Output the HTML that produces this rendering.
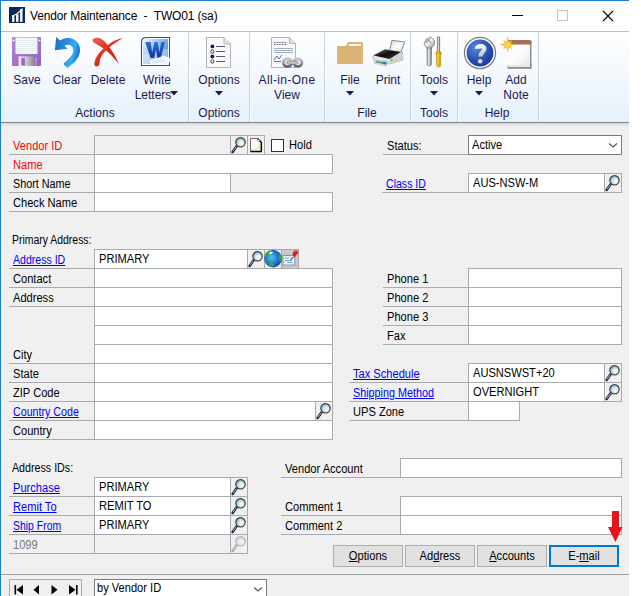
<!DOCTYPE html><html><head><meta charset="utf-8"><style>
html,body{margin:0;padding:0;}
body{width:641px;height:596px;overflow:hidden;background:#fff;position:relative;font-family:"Liberation Sans",sans-serif;}
.t{position:absolute;font-size:12px;line-height:12px;white-space:nowrap;color:#000;transform:scaleX(0.925);transform-origin:0 0;}
.tc{transform-origin:50% 0;}
.rt{position:absolute;font-size:12px;line-height:14px;white-space:nowrap;color:#1c1852;}
.lnk{color:#0000ff;text-decoration:underline;}
.b{position:absolute;border:1px solid #a9a9b1;box-sizing:content-box;}
.l{position:absolute;}
.ic{position:absolute;}
.ic svg{display:block;}
</style></head><body>
<div id="win" style="position:absolute;left:0;top:0;width:629px;height:596px;background:#f0f0f0;"></div>
<div class="l" style="left:0;top:0;width:629px;height:1px;background:#1a7fd4"></div>
<div class="l" style="left:0;top:0;width:1px;height:596px;background:#1a7fd4"></div>
<div class="l" style="left:1px;top:1px;width:628px;height:30px;background:#fff"></div>
<div class="l" style="left:1px;top:31px;width:628px;height:1px;background:#b9bcc3"></div>
<div class="l" style="left:1px;top:32px;width:628px;height:90px;background:linear-gradient(#fdfeff,#f5f9fd 40%,#e5f1fc)"></div>
<div class="l" style="left:1px;top:122px;width:628px;height:1px;background:#838589"></div>
<div class="l" style="left:1px;top:123px;width:628px;height:4px;background:linear-gradient(#d6d8db,#f0f0f0)"></div>

<div class="ic" style="left:9px;top:7px;"><svg width="16" height="16" viewBox="0 0 16 16"><rect width="16" height="16" fill="#0b2a5a"/><rect x="3.1" y="9" width="2.3" height="5.9" fill="#fff"/><rect x="7.1" y="7.4" width="2.4" height="7.5" fill="#fff"/><rect x="11.1" y="4.2" width="2.4" height="10.7" fill="#fff"/><path d="M3 9 L7.5 7.2 L12.3 3" stroke="#fff" stroke-width="1.1" fill="none"/><path d="M10.6 2.2 L14 1.6 L13.4 5 Z" fill="#fff"/></svg></div>
<div class="t" style="left:30px;top:9px;font-size:12px;line-height:14px;letter-spacing:-0.16px;transform:none;">Vendor Maintenance &nbsp;- &nbsp;TWO01 (sa)</div>
<div class="l" style="left:512px;top:15px;width:11px;height:1px;background:#000"></div>
<div class="b" style="left:557px;top:10px;width:9px;height:9px;background:transparent;border-color:#c4c4c4"></div>
<div class="ic" style="left:602px;top:10px;"><svg width="12" height="12" viewBox="0 0 12 12"><path d="M1 1 L11 11 M11 1 L1 11" stroke="#000" stroke-width="1.1"/></svg></div>
<div class="l" style="left:188px;top:32px;width:1px;height:90px;background:#ccd2da"></div>
<div class="l" style="left:189px;top:32px;width:1px;height:90px;background:#fbfdff"></div>
<div class="l" style="left:249px;top:32px;width:1px;height:90px;background:#ccd2da"></div>
<div class="l" style="left:250px;top:32px;width:1px;height:90px;background:#fbfdff"></div>
<div class="l" style="left:324px;top:32px;width:1px;height:90px;background:#ccd2da"></div>
<div class="l" style="left:325px;top:32px;width:1px;height:90px;background:#fbfdff"></div>
<div class="l" style="left:410px;top:32px;width:1px;height:90px;background:#ccd2da"></div>
<div class="l" style="left:411px;top:32px;width:1px;height:90px;background:#fbfdff"></div>
<div class="l" style="left:457px;top:32px;width:1px;height:90px;background:#ccd2da"></div>
<div class="l" style="left:458px;top:32px;width:1px;height:90px;background:#fbfdff"></div>
<div class="l" style="left:538px;top:32px;width:1px;height:90px;background:#ccd2da"></div>
<div class="l" style="left:539px;top:32px;width:1px;height:90px;background:#fbfdff"></div>
<div class="rt" style="left:-33px;width:120px;text-align:center;top:73px;">Save</div>
<div class="rt" style="left:7px;width:120px;text-align:center;top:73px;">Clear</div>
<div class="rt" style="left:48px;width:120px;text-align:center;top:73px;">Delete</div>
<div class="rt" style="left:97px;width:120px;text-align:center;top:73px;">Write</div>
<div class="rt" style="left:93px;width:120px;text-align:center;top:88px;">Letters</div>
<div class="ic" style="left:170px;top:91px;"><svg width="8" height="5" viewBox="0 0 8 5"><path d="M0 0 L8 0 L4 4.5 Z" fill="#1b1b50"/></svg></div>
<div class="rt" style="left:159px;width:120px;text-align:center;top:73px;">Options</div>
<div class="ic" style="left:214.5px;top:91px;"><svg width="8" height="5" viewBox="0 0 8 5"><path d="M0 0 L8 0 L4 4.5 Z" fill="#1b1b50"/></svg></div>
<div class="rt" style="left:227px;width:120px;text-align:center;top:73px;"><span style="letter-spacing:0.35px">All-in-One</span></div>
<div class="rt" style="left:227px;width:120px;text-align:center;top:88px;">View</div>
<div class="rt" style="left:290px;width:120px;text-align:center;top:73px;">File</div>
<div class="ic" style="left:346px;top:91px;"><svg width="8" height="5" viewBox="0 0 8 5"><path d="M0 0 L8 0 L4 4.5 Z" fill="#1b1b50"/></svg></div>
<div class="rt" style="left:328px;width:120px;text-align:center;top:73px;">Print</div>
<div class="rt" style="left:374px;width:120px;text-align:center;top:73px;">Tools</div>
<div class="ic" style="left:429.5px;top:91px;"><svg width="8" height="5" viewBox="0 0 8 5"><path d="M0 0 L8 0 L4 4.5 Z" fill="#1b1b50"/></svg></div>
<div class="rt" style="left:419px;width:120px;text-align:center;top:73px;">Help</div>
<div class="ic" style="left:475px;top:91px;"><svg width="8" height="5" viewBox="0 0 8 5"><path d="M0 0 L8 0 L4 4.5 Z" fill="#1b1b50"/></svg></div>
<div class="rt" style="left:456px;width:120px;text-align:center;top:73px;">Add</div>
<div class="rt" style="left:456px;width:120px;text-align:center;top:88px;">Note</div>
<div class="rt" style="left:35px;width:120px;text-align:center;top:106px;">Actions</div>
<div class="rt" style="left:159px;width:120px;text-align:center;top:106px;">Options</div>
<div class="rt" style="left:307px;width:120px;text-align:center;top:106px;">File</div>
<div class="rt" style="left:374px;width:120px;text-align:center;top:106px;">Tools</div>
<div class="rt" style="left:437px;width:120px;text-align:center;top:106px;">Help</div>
<div class="ic" style="left:11px;top:36px;"><svg width="32" height="32" viewBox="0 0 32 32">
<defs><linearGradient id="fpb" x1="0" y1="0" x2="1" y2="1"><stop offset="0" stop-color="#b086d2"/><stop offset="1" stop-color="#9260be"/></linearGradient>
<linearGradient id="fps" x1="0" y1="0" x2="1" y2="0"><stop offset="0" stop-color="#f4f4f4"/><stop offset="0.5" stop-color="#c8c8c8"/><stop offset="1" stop-color="#8e8e8e"/></linearGradient></defs>
<rect x="1" y="1" width="29" height="29" rx="1" fill="url(#fpb)"/>
<rect x="4.5" y="1.5" width="22" height="16.5" fill="#f6f9fc"/>
<path d="M5 4.5H26M5 6.5H26M5 8.5H26M5 10.5H26M5 12.5H26M5 14.5H26M5 16.5H26" stroke="#d8e4ee" stroke-width="0.6"/>
<rect x="7.6" y="20.4" width="15.6" height="9.6" fill="url(#fps)"/>
<rect x="10.3" y="22" width="3.6" height="7.5" fill="#9d66c8"/>
<rect x="24" y="21" width="2" height="9" fill="#b486d8"/>
<circle cx="2.6" cy="4.4" r="0.9" fill="#fff"/><circle cx="28.6" cy="4.4" r="0.9" fill="#fff"/>
</svg></div>
<div class="ic" style="left:53px;top:36px;"><svg width="28" height="33" viewBox="0 0 28 33">
<defs><linearGradient id="clg" x1="0" y1="0" x2="1" y2="0.3"><stop offset="0" stop-color="#1c6cc0"/><stop offset="0.55" stop-color="#2a90e0"/><stop offset="0.8" stop-color="#38b0f4"/><stop offset="1" stop-color="#1c78cc"/></linearGradient></defs>
<path d="M3.3 1 L7 4.5 C10 2.5, 13 2, 15.5 2 C22 2, 27 7, 27 14 C27 19, 24.5 23, 21 26.5 L14.5 32 L10.3 28 L16.5 22 C19 19.5, 20.2 17, 20.2 14 C20.2 10.5, 17.5 8.8, 15 8.8 C13.5 8.8, 12.5 9.2, 11.5 10 L14.8 12.8 L1.8 14.3 Z" fill="url(#clg)"/>
</svg></div>
<div class="ic" style="left:91px;top:36px;"><svg width="34" height="32" viewBox="0 0 34 32">
<defs><linearGradient id="dlg" x1="0" y1="0" x2="1" y2="1"><stop offset="0" stop-color="#ee6a58"/><stop offset="0.5" stop-color="#dc2814"/><stop offset="1" stop-color="#c81a08"/></linearGradient></defs>
<path d="M1.5 4.5 C1 2.5, 5 1.5, 8.2 2 C12 3, 15 7, 17.5 10 C21 14.5, 25 21, 27.9 28 C23 22, 19 17.5, 14.5 14 C10 10.5, 5 8, 2.5 6.5 C1.8 6, 1.5 5.2, 1.5 4.5 Z" fill="url(#dlg)"/>
<path d="M31.9 2 C24 6.5, 18 11, 14 15.5 C10 19.5, 8.5 24, 8.5 27.5 C8.5 29.5, 7 30.5, 5.5 30.5 C4 30.5, 3.2 29, 3.4 27 C3.8 23, 6.5 18.5, 11 14 C17 8, 24 3.5, 31.9 2 Z" fill="url(#dlg)"/>
</svg></div>
<div class="ic" style="left:140px;top:36px;"><svg width="32" height="32" viewBox="0 0 32 32">
<defs><linearGradient id="wbg" x1="0" y1="0" x2="1" y2="0.6"><stop offset="0" stop-color="#eef5fd"/><stop offset="0.45" stop-color="#a8c8f0"/><stop offset="1" stop-color="#5a90dc"/></linearGradient>
<linearGradient id="wW" x1="0" y1="0" x2="0" y2="1"><stop offset="0" stop-color="#2c70d8"/><stop offset="1" stop-color="#0a3a9c"/></linearGradient></defs>
<path d="M6.5 1.5 H29.5 V29.5 H1.5 V6.5 Q1.5 1.5 6.5 1.5 Z" fill="#fff" stroke="#1d54a8" stroke-width="1.1"/>
<path d="M7 3 H28 V28 H3 V7 Q3 3 7 3 Z" fill="url(#wbg)"/>
<path d="M3 20 Q10 14 28 13 V28 H3 Z" fill="#ffffff" opacity="0.35"/>
<path d="M5.2 6 H10.6 L12.2 16.2 L14.6 6 H17.6 L19.4 16.2 L21.2 6 H25 L20.8 22 H17.3 L15.9 13.5 L14.2 22 H10.6 Z" fill="url(#wW)"/>
<path d="M9 25 L24 19.5 L31 22.5 L28.5 29 L11 28.5 Z" fill="#f6f9fd" opacity="0.95"/>
<path d="M12 26 L22 23.5 M13 27.3 L25 24.8" stroke="#bcd0e8" stroke-width="0.6"/>
</svg></div>
<div class="ic" style="left:205px;top:36px;"><svg width="28" height="33" viewBox="0 0 28 33">
<path d="M1.5 1.5 H19 L25.5 8 V31.5 H1.5 Z" fill="#f8f8f8" stroke="#b4b4b4" stroke-width="1"/>
<path d="M19 1.5 V8 H25.5" fill="#e4e4e4" stroke="#b4b4b4" stroke-width="1"/>
<circle cx="7.4" cy="10.4" r="1.9" fill="#1e1a48"/>
<circle cx="7.4" cy="15.5" r="1.6" fill="#fff" stroke="#1e1a48" stroke-width="0.9"/>
<circle cx="7.4" cy="20.5" r="1.9" fill="#1e1a48"/>
<circle cx="7.4" cy="25.5" r="1.6" fill="#fff" stroke="#1e1a48" stroke-width="0.9"/>
<path d="M11 10.5H20M11 15.5H20M11 20.5H20M11 25.5H20" stroke="#5e5682" stroke-width="1.1"/>
</svg></div>
<div class="ic" style="left:270px;top:36px;"><svg width="34" height="33" viewBox="0 0 34 33">
<defs><linearGradient id="chg" x1="0" y1="0" x2="0" y2="1"><stop offset="0" stop-color="#c4c4cc"/><stop offset="0.5" stop-color="#9a9aa2"/><stop offset="1" stop-color="#5c5c66"/></linearGradient></defs>
<path d="M1.5 1.5 H19.5 L25.5 7.5 V31.5 H1.5 Z" fill="#f8f8f8" stroke="#b4b4b4" stroke-width="1"/>
<path d="M19.5 1.5 V7.5 H25.5" fill="#e4e4e4" stroke="#b4b4b4" stroke-width="1"/>
<path d="M4 6.5H17M4 8.5H17" stroke="#404050" stroke-width="0.8" stroke-dasharray="1 0.6"/>
<path d="M4 12.5H23M4 14.5H23M4 16.5H23" stroke="#9aa8bc" stroke-width="0.9"/>
<path d="M4 24 L7 20 L9 23 L12 19 M4 25.5 H11" stroke="#3060d0" stroke-width="0.9" fill="none"/>
<rect x="13.2" y="22.8" width="8.6" height="7.6" rx="3.8" fill="#dcdce0" stroke="url(#chg)" stroke-width="2.5"/>
<rect x="23.6" y="22.8" width="8.4" height="7.6" rx="3.8" fill="#dcdce0" stroke="url(#chg)" stroke-width="2.5"/>
<rect x="17" y="25.3" width="10.5" height="2.8" rx="1.4" fill="#c8c8cc" stroke="#74747c" stroke-width="0.6"/>
</svg></div>
<div class="ic" style="left:336px;top:41px;"><svg width="28" height="24" viewBox="0 0 28 24">
<path d="M1 6.5 Q1 5 2.5 5 H10 L11.6 1.8 Q12 1 13 1 H25.5 Q27 1 27 2.5 V21.5 Q27 23 25.5 23 H2.5 Q1 23 1 21.5 Z" fill="#dcb478"/>
<path d="M12.3 5 L13.3 3 H25 V5 Z" fill="#fbf6ec"/>
<path d="M1 6 H27" stroke="#d2a868" stroke-width="0.6"/>
</svg></div>
<div class="ic" style="left:372px;top:39px;"><svg width="34" height="28" viewBox="0 0 34 28">
<defs><linearGradient id="prp" x1="0" y1="0" x2="1" y2="1"><stop offset="0" stop-color="#d8d8d8"/><stop offset="0.5" stop-color="#fafafa"/><stop offset="1" stop-color="#e0e0e0"/></linearGradient>
<linearGradient id="prt" x1="0" y1="0" x2="1" y2="1"><stop offset="0" stop-color="#707070"/><stop offset="0.45" stop-color="#101010"/><stop offset="1" stop-color="#303030"/></linearGradient>
<linearGradient id="prph" x1="0" y1="0" x2="1" y2="0"><stop offset="0" stop-color="#3a8ce8"/><stop offset="0.5" stop-color="#50b060"/><stop offset="1" stop-color="#1a5ad0"/></linearGradient></defs>
<path d="M17.6 11.8 L19.9 1.4 L32.7 2.9 L28.8 13.6 Z" fill="url(#prp)" stroke="#6a6a6a" stroke-width="0.8"/>
<path d="M0.8 17 L12.8 10.4 L30.5 13.2 L31 21 L17.6 25 L1.5 21 Z" fill="#e6e6e6" stroke="#9a9a9a" stroke-width="0.6"/>
<path d="M1.6 16.6 L12.8 10.6 L28.8 13 L17.6 20.1 Z" fill="url(#prt)"/>
<path d="M17.6 20.1 L30.3 13.6 L30.9 20.7 L17.6 24.3 Z" fill="#d0d0d0"/>
<path d="M2.5 21.2 L15.8 22.4 L14.6 27 L2.2 24.2 Z" fill="#f4f4f4" stroke="#9a9a9a" stroke-width="0.5"/>
<path d="M3.8 22 L14.8 23 L14 25.8 L3.5 23.6 Z" fill="url(#prph)"/>
<circle cx="19.6" cy="21" r="0.9" fill="#40c040"/>
</svg></div>
<div class="ic" style="left:423px;top:36px;"><svg width="20" height="32" viewBox="0 0 20 32">
<defs><linearGradient id="wrg" x1="0" y1="0" x2="1" y2="0"><stop offset="0" stop-color="#8a8a8a"/><stop offset="0.35" stop-color="#e8e8e8"/><stop offset="0.7" stop-color="#b0b0b0"/><stop offset="1" stop-color="#606060"/></linearGradient>
<linearGradient id="wrh" x1="0" y1="0" x2="1" y2="1"><stop offset="0" stop-color="#c8c8c8"/><stop offset="0.5" stop-color="#f0f0f0"/><stop offset="1" stop-color="#8a8a8a"/></linearGradient>
<linearGradient id="sdg" x1="0" y1="0" x2="1" y2="0"><stop offset="0" stop-color="#d09000"/><stop offset="0.4" stop-color="#f8d030"/><stop offset="1" stop-color="#b07800"/></linearGradient></defs>
<path d="M4 11 L4.2 29 Q6.2 31.3 8.3 29 L8.5 11 Z" fill="url(#wrg)" stroke="#6c6c6c" stroke-width="0.6"/>
<path d="M1.1 8.3 L3.2 3.1 L4.5 2.1 L5.6 4.2 L6.6 1.2 L8.5 1.6 L11.4 4.2 L11.2 8.8 L8.5 12 L4 12 Z" fill="url(#wrh)" stroke="#6c6c6c" stroke-width="0.7" stroke-linejoin="round"/>
<path d="M3 6.5 L5.6 4.2 L8 7" fill="none" stroke="#5a5a5a" stroke-width="0.8"/>
<rect x="14.2" y="1" width="2.6" height="15.5" fill="url(#wrg)" stroke="#707070" stroke-width="0.6"/>
<path d="M12.8 16 H18.2 V18.5 L17.6 19 V29.5 Q17.6 31 15.5 31 Q13.4 31 13.4 29.5 V19 L12.8 18.5 Z" fill="url(#sdg)" stroke="#b88a00" stroke-width="0.5"/>
</svg></div>
<div class="ic" style="left:463px;top:36px;"><svg width="34" height="34" viewBox="0 0 34 34">
<defs><radialGradient id="hpg" cx="0.35" cy="0.3" r="0.8"><stop offset="0" stop-color="#5a8ae0"/><stop offset="0.6" stop-color="#2450b0"/><stop offset="1" stop-color="#183a90"/></radialGradient></defs>
<circle cx="17" cy="17" r="15.6" fill="#fafafa" stroke="#7c7c7c" stroke-width="1.2"/>
<circle cx="17" cy="17" r="13.4" fill="url(#hpg)"/>
<defs><linearGradient id="qg" x1="0" y1="0" x2="0.3" y2="1"><stop offset="0" stop-color="#ffffff"/><stop offset="1" stop-color="#c8c8c8"/></linearGradient></defs><path d="M14 12.8 C14 9.6, 21.4 9.2, 21.4 12.8 C21.4 15.6, 17.4 16, 17.4 20.4" fill="none" stroke="url(#qg)" stroke-width="4.3"/>
<circle cx="17.2" cy="25.2" r="2.3" fill="#d8d8d8"/>
</svg></div>
<div class="ic" style="left:499px;top:36px;"><svg width="34" height="34" viewBox="0 0 34 34">
<defs><linearGradient id="nbg" x1="0" y1="0" x2="1" y2="1"><stop offset="0" stop-color="#ffffff"/><stop offset="0.6" stop-color="#fafafa"/><stop offset="1" stop-color="#e4e4e4"/></linearGradient>
<radialGradient id="stg" cx="0.5" cy="0.5" r="0.5"><stop offset="0" stop-color="#ffe040"/><stop offset="1" stop-color="#f09010"/></radialGradient></defs>
<rect x="8.5" y="28.5" width="24" height="4.3" fill="#8e8e8e"/>
<rect x="9" y="28.5" width="22.5" height="2.5" fill="#e8e8e8"/>
<path d="M8.2 4 H32.4 V29 H8.2 Z" fill="url(#nbg)"/>
<path d="M31.7 5 V32.5" stroke="#8a8a8a" stroke-width="1.4"/>
<path d="M8.2 8.5 V5.5 Q8.2 4 9.7 4 H30.9 Q32.4 4 32.4 5.5 V8.5 Z" fill="#a66e56"/>
<path d="M8.80 0.30 L9.95 5.73 L13.47 3.83 L11.57 7.35 L17.00 8.50 L11.57 9.65 L13.47 13.17 L9.95 11.27 L8.80 16.70 L7.65 11.27 L4.13 13.17 L6.03 9.65 L0.60 8.50 L6.03 7.35 L4.13 3.83 L7.65 5.73 Z" fill="url(#stg)"/>
</svg></div>

<div class="l" style="left:9px;top:154px;width:86px;height:1px;background:#a9a9b1"></div>
<div class="l" style="left:9px;top:173px;width:86px;height:1px;background:#a9a9b1"></div>
<div class="l" style="left:9px;top:192px;width:86px;height:1px;background:#a9a9b1"></div>
<div class="l" style="left:9px;top:211px;width:86px;height:1px;background:#a9a9b1"></div>
<div class="t " style="left:13px;top:140px;color:#ff0000;">Vendor ID</div>
<div class="t " style="left:13px;top:159px;color:#ff0000;">Name</div>
<div class="t " style="left:13px;top:178px;transform:scaleX(0.9);">Short Name</div>
<div class="t " style="left:13px;top:197px;">Check Name</div>
<div class="b" style="left:94px;top:135px;width:135px;height:18px;background:#f0f0f0;border-color:#a9a9b1;"></div>
<div class="b" style="left:231px;top:135px;width:16px;height:18px;background:#f0f0f0;border-color:#a9a9b1;border-left:none;"></div>
<div class="ic" style="left:230px;top:135px;"><svg width="17" height="19" viewBox="0 0 17 19"><defs><radialGradient id="lg1" cx="0.6" cy="0.6" r="0.65"><stop offset="0" stop-color="#fcf8e0"/><stop offset="0.35" stop-color="#e4eef6"/><stop offset="0.75" stop-color="#90c4f0"/><stop offset="1" stop-color="#6aa8e0"/></radialGradient></defs><path d="M6.6 11.3 L2.6 17" stroke="#20203a" stroke-width="2.5" stroke-linecap="round"/><path d="M6.3 11.6 L3 16.3" stroke="#d0dcec" stroke-width="0.8"/><circle cx="10.5" cy="7.3" r="4.7" fill="url(#lg1)" stroke="#45432e" stroke-width="1.2"/></svg></div>
<div class="b" style="left:248px;top:135px;width:16px;height:18px;background:#f0f0f0;border-left:none;"></div>
<div class="ic" style="left:249px;top:137px;"><svg width="14" height="16" viewBox="0 0 14 16"><path d="M1.5 14.5 V1.5 H8.5 L12.5 5.5 V14.5 Z" fill="#fffdf6"/><path d="M1.5 14.5 V1.5 H8.3" fill="none" stroke="#6a6a6a" stroke-width="1"/><path d="M8.5 1.5 L12.3 5.3 V14.4 H1.5" fill="none" stroke="#000" stroke-width="1.5"/><circle cx="9.6" cy="3.6" r="1.1" fill="#fff" stroke="#555" stroke-width="0.6"/><g fill="#f4e400"><circle cx="3" cy="12.4" r="0.75"/><circle cx="5" cy="12.4" r="0.75"/><circle cx="7.1" cy="12.4" r="0.75"/><circle cx="9" cy="12" r="0.75"/><circle cx="10.2" cy="10.6" r="0.75"/><circle cx="10.6" cy="8.9" r="0.75"/><circle cx="10.6" cy="7" r="0.75"/><circle cx="8.2" cy="10.8" r="0.6"/></g></svg></div>
<div class="b" style="left:271px;top:139px;width:11px;height:11px;background:#fff;border-color:#333;"></div>
<div class="t " style="left:289px;top:139px;">Hold</div>
<div class="b" style="left:94px;top:154px;width:237px;height:18px;background:#fff;border-color:#a9a9b1;"></div>
<div class="b" style="left:94px;top:173px;width:135px;height:18px;background:#fff;border-color:#a9a9b1;"></div>
<div class="b" style="left:94px;top:192px;width:237px;height:18px;background:#fff;border-color:#a9a9b1;"></div>
<div class="l" style="left:383px;top:154px;width:86px;height:1px;background:#a9a9b1"></div>
<div class="t " style="left:387px;top:140px;">Status:</div>
<div class="b" style="left:468px;top:135px;width:152px;height:18px;background:#fff;border-color:#7a7a7a;"></div>
<div class="t " style="left:472px;top:139px;">Active</div>
<div class="ic" style="left:608px;top:142px;"><svg width="10" height="7" viewBox="0 0 10 7"><path d="M1 1.5 L5 5 L9 1.5" fill="none" stroke="#555" stroke-width="1.2"/></svg></div>
<div class="l" style="left:382px;top:192px;width:87px;height:1px;background:#a9a9b1"></div>
<div class="t lnk" style="left:386px;top:178px;transform:scaleX(0.88);">Class ID</div>
<div class="b" style="left:468px;top:173px;width:135px;height:18px;background:#fff;border-color:#a9a9b1;"></div>
<div class="t " style="left:473px;top:177px;">AUS-NSW-M</div>
<div class="b" style="left:605px;top:173px;width:16px;height:18px;background:#f0f0f0;border-color:#a9a9b1;border-left:none;"></div>
<div class="ic" style="left:604px;top:173px;"><svg width="17" height="19" viewBox="0 0 17 19"><defs><radialGradient id="lg2" cx="0.6" cy="0.6" r="0.65"><stop offset="0" stop-color="#fcf8e0"/><stop offset="0.35" stop-color="#e4eef6"/><stop offset="0.75" stop-color="#90c4f0"/><stop offset="1" stop-color="#6aa8e0"/></radialGradient></defs><path d="M6.6 11.3 L2.6 17" stroke="#20203a" stroke-width="2.5" stroke-linecap="round"/><path d="M6.3 11.6 L3 16.3" stroke="#d0dcec" stroke-width="0.8"/><circle cx="10.5" cy="7.3" r="4.7" fill="url(#lg2)" stroke="#45432e" stroke-width="1.2"/></svg></div>
<div class="t " style="left:12px;top:234px;transform:scaleX(0.87);">Primary Address:</div>
<div class="l" style="left:9px;top:268px;width:86px;height:1px;background:#a9a9b1"></div>
<div class="l" style="left:9px;top:287px;width:86px;height:1px;background:#a9a9b1"></div>
<div class="l" style="left:9px;top:306px;width:86px;height:1px;background:#a9a9b1"></div>
<div class="l" style="left:9px;top:363px;width:86px;height:1px;background:#a9a9b1"></div>
<div class="l" style="left:9px;top:382px;width:86px;height:1px;background:#a9a9b1"></div>
<div class="l" style="left:9px;top:401px;width:86px;height:1px;background:#a9a9b1"></div>
<div class="l" style="left:9px;top:420px;width:86px;height:1px;background:#a9a9b1"></div>
<div class="l" style="left:9px;top:439px;width:86px;height:1px;background:#a9a9b1"></div>
<div class="t lnk" style="left:13px;top:254px;transform:scaleX(0.88);">Address ID</div>
<div class="t " style="left:13px;top:273px;">Contact</div>
<div class="t " style="left:13px;top:292px;">Address</div>
<div class="t " style="left:13px;top:349px;">City</div>
<div class="t " style="left:13px;top:368px;">State</div>
<div class="t " style="left:13px;top:387px;">ZIP Code</div>
<div class="t lnk" style="left:13px;top:406px;transform:scaleX(0.89);">Country Code</div>
<div class="t " style="left:13px;top:425px;">Country</div>
<div class="b" style="left:94px;top:249px;width:152px;height:18px;background:#fff;border-color:#a9a9b1;"></div>
<div class="t " style="left:99px;top:253px;">PRIMARY</div>
<div class="b" style="left:248px;top:249px;width:16px;height:18px;background:#f0f0f0;border-color:#a9a9b1;border-left:none;"></div>
<div class="ic" style="left:247px;top:249px;"><svg width="17" height="19" viewBox="0 0 17 19"><defs><radialGradient id="lg3" cx="0.6" cy="0.6" r="0.65"><stop offset="0" stop-color="#fcf8e0"/><stop offset="0.35" stop-color="#e4eef6"/><stop offset="0.75" stop-color="#90c4f0"/><stop offset="1" stop-color="#6aa8e0"/></radialGradient></defs><path d="M6.6 11.3 L2.6 17" stroke="#20203a" stroke-width="2.5" stroke-linecap="round"/><path d="M6.3 11.6 L3 16.3" stroke="#d0dcec" stroke-width="0.8"/><circle cx="10.5" cy="7.3" r="4.7" fill="url(#lg3)" stroke="#45432e" stroke-width="1.2"/></svg></div>
<div class="b" style="left:265px;top:249px;width:16px;height:18px;background:#f0f0f0;border-left:none;"></div>
<div class="ic" style="left:264px;top:249px;"><svg width="18" height="19" viewBox="0 0 18 19"><defs><radialGradient id="gl" cx="0.42" cy="0.45" r="0.6"><stop offset="0" stop-color="#4ad0e0"/><stop offset="0.55" stop-color="#2a7ad8"/><stop offset="1" stop-color="#1838b0"/></radialGradient></defs><circle cx="9" cy="9.6" r="8.8" fill="url(#gl)"/><path d="M1 6 Q2 2.5 5 1.8 Q5.5 4 4.5 6.5 Q3 8 1.2 8 Z M15.5 4 Q17.5 6 17.6 9.5 Q17 12.5 15.5 13 Q14.6 9 15.5 4 Z M4.5 13 Q7.5 12.5 10 14.5 Q10.5 17 8 18 Q5 17.5 4.5 13 Z" fill="#30b030"/><path d="M5 3.5 Q7 2 9 3 Q8 5 6 5.5 Z" fill="#e8f4ff"/></svg></div>
<div class="b" style="left:282px;top:249px;width:16px;height:18px;background:#c8c8c8;border-left:none;"></div>
<div class="ic" style="left:281px;top:249px;"><svg width="18" height="19" viewBox="0 0 18 19"><rect x="2" y="6.5" width="11.8" height="9.5" fill="#f2f8fc" stroke="#7a98b8" stroke-width="1"/><path d="M3.5 9 H8 M4 11.5 H11 M6 13.5 H12" stroke="#4a90d8" stroke-width="0.8"/><path d="M8.5 8 L12 9 M3 13 L5 12" stroke="#90c070" stroke-width="0.8"/><path d="M9.5 11 L13 7.5" stroke="#222" stroke-width="1"/><path d="M13.5 1.5 Q16 0.5 17.2 2.8 Q17.5 4.5 15.8 5.2 L13.8 8.2 L12 6.5 L11.5 4.5 Z" fill="#e01818"/><path d="M14 2.5 Q15.5 2 16 3" stroke="#ff8080" stroke-width="0.6" fill="none"/></svg></div>
<div class="b" style="left:94px;top:268px;width:237px;height:18px;background:#fff;border-color:#a9a9b1;"></div>
<div class="b" style="left:94px;top:287px;width:237px;height:18px;background:#fff;border-color:#a9a9b1;"></div>
<div class="b" style="left:94px;top:306px;width:237px;height:18px;background:#fff;border-color:#a9a9b1;"></div>
<div class="b" style="left:94px;top:325px;width:237px;height:18px;background:#fff;border-color:#a9a9b1;"></div>
<div class="b" style="left:94px;top:344px;width:237px;height:18px;background:#fff;border-color:#a9a9b1;"></div>
<div class="b" style="left:94px;top:363px;width:237px;height:18px;background:#fff;border-color:#a9a9b1;"></div>
<div class="b" style="left:94px;top:382px;width:237px;height:18px;background:#fff;border-color:#a9a9b1;"></div>
<div class="b" style="left:94px;top:420px;width:237px;height:18px;background:#fff;border-color:#a9a9b1;"></div>
<div class="b" style="left:94px;top:401px;width:220px;height:18px;background:#fff;border-color:#a9a9b1;"></div>
<div class="b" style="left:316px;top:401px;width:16px;height:18px;background:#f0f0f0;border-color:#a9a9b1;border-left:none;"></div>
<div class="ic" style="left:315px;top:401px;"><svg width="17" height="19" viewBox="0 0 17 19"><defs><radialGradient id="lg4" cx="0.6" cy="0.6" r="0.65"><stop offset="0" stop-color="#fcf8e0"/><stop offset="0.35" stop-color="#e4eef6"/><stop offset="0.75" stop-color="#90c4f0"/><stop offset="1" stop-color="#6aa8e0"/></radialGradient></defs><path d="M6.6 11.3 L2.6 17" stroke="#20203a" stroke-width="2.5" stroke-linecap="round"/><path d="M6.3 11.6 L3 16.3" stroke="#d0dcec" stroke-width="0.8"/><circle cx="10.5" cy="7.3" r="4.7" fill="url(#lg4)" stroke="#45432e" stroke-width="1.2"/></svg></div>
<div class="l" style="left:383px;top:287px;width:86px;height:1px;background:#a9a9b1"></div>
<div class="l" style="left:383px;top:306px;width:86px;height:1px;background:#a9a9b1"></div>
<div class="l" style="left:383px;top:325px;width:86px;height:1px;background:#a9a9b1"></div>
<div class="l" style="left:383px;top:344px;width:86px;height:1px;background:#a9a9b1"></div>
<div class="t " style="left:387px;top:273px;">Phone 1</div>
<div class="t " style="left:387px;top:292px;">Phone 2</div>
<div class="t " style="left:387px;top:311px;">Phone 3</div>
<div class="t " style="left:387px;top:330px;">Fax</div>
<div class="b" style="left:468px;top:268px;width:152px;height:18px;background:#fff;border-color:#a9a9b1;"></div>
<div class="b" style="left:468px;top:287px;width:152px;height:18px;background:#fff;border-color:#a9a9b1;"></div>
<div class="b" style="left:468px;top:306px;width:152px;height:18px;background:#fff;border-color:#a9a9b1;"></div>
<div class="b" style="left:468px;top:325px;width:152px;height:18px;background:#fff;border-color:#a9a9b1;"></div>
<div class="l" style="left:349px;top:382px;width:120px;height:1px;background:#a9a9b1"></div>
<div class="l" style="left:349px;top:401px;width:120px;height:1px;background:#a9a9b1"></div>
<div class="l" style="left:349px;top:420px;width:120px;height:1px;background:#a9a9b1"></div>
<div class="t lnk" style="left:353px;top:368px;">Tax Schedule</div>
<div class="t lnk" style="left:353px;top:387px;transform:scaleX(0.9);">Shipping Method</div>
<div class="t " style="left:353px;top:406px;">UPS Zone</div>
<div class="b" style="left:468px;top:363px;width:135px;height:18px;background:#fff;border-color:#a9a9b1;"></div>
<div class="t " style="left:473px;top:367px;">AUSNSWST+20</div>
<div class="b" style="left:605px;top:363px;width:16px;height:18px;background:#f0f0f0;border-color:#a9a9b1;border-left:none;"></div>
<div class="ic" style="left:604px;top:363px;"><svg width="17" height="19" viewBox="0 0 17 19"><defs><radialGradient id="lg5" cx="0.6" cy="0.6" r="0.65"><stop offset="0" stop-color="#fcf8e0"/><stop offset="0.35" stop-color="#e4eef6"/><stop offset="0.75" stop-color="#90c4f0"/><stop offset="1" stop-color="#6aa8e0"/></radialGradient></defs><path d="M6.6 11.3 L2.6 17" stroke="#20203a" stroke-width="2.5" stroke-linecap="round"/><path d="M6.3 11.6 L3 16.3" stroke="#d0dcec" stroke-width="0.8"/><circle cx="10.5" cy="7.3" r="4.7" fill="url(#lg5)" stroke="#45432e" stroke-width="1.2"/></svg></div>
<div class="b" style="left:468px;top:382px;width:135px;height:18px;background:#fff;border-color:#a9a9b1;"></div>
<div class="t " style="left:473px;top:386px;">OVERNIGHT</div>
<div class="b" style="left:605px;top:382px;width:16px;height:18px;background:#f0f0f0;border-color:#a9a9b1;border-left:none;"></div>
<div class="ic" style="left:604px;top:382px;"><svg width="17" height="19" viewBox="0 0 17 19"><defs><radialGradient id="lg6" cx="0.6" cy="0.6" r="0.65"><stop offset="0" stop-color="#fcf8e0"/><stop offset="0.35" stop-color="#e4eef6"/><stop offset="0.75" stop-color="#90c4f0"/><stop offset="1" stop-color="#6aa8e0"/></radialGradient></defs><path d="M6.6 11.3 L2.6 17" stroke="#20203a" stroke-width="2.5" stroke-linecap="round"/><path d="M6.3 11.6 L3 16.3" stroke="#d0dcec" stroke-width="0.8"/><circle cx="10.5" cy="7.3" r="4.7" fill="url(#lg6)" stroke="#45432e" stroke-width="1.2"/></svg></div>
<div class="b" style="left:468px;top:401px;width:50px;height:18px;background:#fff;border-color:#a9a9b1;"></div>
<div class="t " style="left:12px;top:462px;transform:scaleX(0.89);">Address IDs:</div>
<div class="l" style="left:9px;top:496px;width:86px;height:1px;background:#a9a9b1"></div>
<div class="l" style="left:9px;top:515px;width:86px;height:1px;background:#a9a9b1"></div>
<div class="l" style="left:9px;top:534px;width:86px;height:1px;background:#a9a9b1"></div>
<div class="l" style="left:9px;top:553px;width:86px;height:1px;background:#a9a9b1"></div>
<div class="t lnk" style="left:13px;top:482px;">Purchase</div>
<div class="t lnk" style="left:13px;top:501px;">Remit To</div>
<div class="t lnk" style="left:13px;top:520px;transform:scaleX(0.87);">Ship From</div>
<div class="t " style="left:13px;top:539px;color:#7a7a7a;">1099</div>
<div class="b" style="left:94px;top:477px;width:135px;height:18px;background:#fff;border-color:#a9a9b1;"></div>
<div class="t " style="left:99px;top:481px;">PRIMARY</div>
<div class="b" style="left:231px;top:477px;width:16px;height:18px;background:#f0f0f0;border-color:#a9a9b1;border-left:none;"></div>
<div class="ic" style="left:230px;top:477px;"><svg width="17" height="19" viewBox="0 0 17 19"><defs><radialGradient id="lg7" cx="0.6" cy="0.6" r="0.65"><stop offset="0" stop-color="#fcf8e0"/><stop offset="0.35" stop-color="#e4eef6"/><stop offset="0.75" stop-color="#90c4f0"/><stop offset="1" stop-color="#6aa8e0"/></radialGradient></defs><path d="M6.6 11.3 L2.6 17" stroke="#20203a" stroke-width="2.5" stroke-linecap="round"/><path d="M6.3 11.6 L3 16.3" stroke="#d0dcec" stroke-width="0.8"/><circle cx="10.5" cy="7.3" r="4.7" fill="url(#lg7)" stroke="#45432e" stroke-width="1.2"/></svg></div>
<div class="b" style="left:94px;top:496px;width:135px;height:18px;background:#fff;border-color:#a9a9b1;"></div>
<div class="t " style="left:99px;top:500px;">REMIT TO</div>
<div class="b" style="left:231px;top:496px;width:16px;height:18px;background:#f0f0f0;border-color:#a9a9b1;border-left:none;"></div>
<div class="ic" style="left:230px;top:496px;"><svg width="17" height="19" viewBox="0 0 17 19"><defs><radialGradient id="lg8" cx="0.6" cy="0.6" r="0.65"><stop offset="0" stop-color="#fcf8e0"/><stop offset="0.35" stop-color="#e4eef6"/><stop offset="0.75" stop-color="#90c4f0"/><stop offset="1" stop-color="#6aa8e0"/></radialGradient></defs><path d="M6.6 11.3 L2.6 17" stroke="#20203a" stroke-width="2.5" stroke-linecap="round"/><path d="M6.3 11.6 L3 16.3" stroke="#d0dcec" stroke-width="0.8"/><circle cx="10.5" cy="7.3" r="4.7" fill="url(#lg8)" stroke="#45432e" stroke-width="1.2"/></svg></div>
<div class="b" style="left:94px;top:515px;width:135px;height:18px;background:#fff;border-color:#a9a9b1;"></div>
<div class="t " style="left:99px;top:519px;">PRIMARY</div>
<div class="b" style="left:231px;top:515px;width:16px;height:18px;background:#f0f0f0;border-color:#a9a9b1;border-left:none;"></div>
<div class="ic" style="left:230px;top:515px;"><svg width="17" height="19" viewBox="0 0 17 19"><defs><radialGradient id="lg9" cx="0.6" cy="0.6" r="0.65"><stop offset="0" stop-color="#fcf8e0"/><stop offset="0.35" stop-color="#e4eef6"/><stop offset="0.75" stop-color="#90c4f0"/><stop offset="1" stop-color="#6aa8e0"/></radialGradient></defs><path d="M6.6 11.3 L2.6 17" stroke="#20203a" stroke-width="2.5" stroke-linecap="round"/><path d="M6.3 11.6 L3 16.3" stroke="#d0dcec" stroke-width="0.8"/><circle cx="10.5" cy="7.3" r="4.7" fill="url(#lg9)" stroke="#45432e" stroke-width="1.2"/></svg></div>
<div class="b" style="left:94px;top:534px;width:135px;height:18px;background:#f0f0f0;border-color:#a9a9b1;"></div>
<div class="b" style="left:231px;top:534px;width:16px;height:18px;background:#f0f0f0;border-color:#a9a9b1;border-left:none;"></div>
<div class="ic" style="left:230px;top:534px;opacity:0.35;"><svg width="17" height="19" viewBox="0 0 17 19"><defs><radialGradient id="lg10" cx="0.6" cy="0.6" r="0.65"><stop offset="0" stop-color="#fcf8e0"/><stop offset="0.35" stop-color="#e4eef6"/><stop offset="0.75" stop-color="#90c4f0"/><stop offset="1" stop-color="#6aa8e0"/></radialGradient></defs><path d="M6.6 11.3 L2.6 17" stroke="#20203a" stroke-width="2.5" stroke-linecap="round"/><path d="M6.3 11.6 L3 16.3" stroke="#d0dcec" stroke-width="0.8"/><circle cx="10.5" cy="7.3" r="4.7" fill="url(#lg10)" stroke="#45432e" stroke-width="1.2"/></svg></div>
<div class="l" style="left:281px;top:477px;width:120px;height:1px;background:#a9a9b1"></div>
<div class="t " style="left:285px;top:463px;">Vendor Account</div>
<div class="b" style="left:400px;top:458px;width:220px;height:18px;background:#fff;border-color:#a9a9b1;"></div>
<div class="l" style="left:281px;top:515px;width:120px;height:1px;background:#a9a9b1"></div>
<div class="l" style="left:281px;top:534px;width:120px;height:1px;background:#a9a9b1"></div>
<div class="t " style="left:285px;top:501px;">Comment 1</div>
<div class="t " style="left:285px;top:520px;">Comment 2</div>
<div class="b" style="left:400px;top:496px;width:220px;height:18px;background:#fff;border-color:#a9a9b1;"></div>
<div class="b" style="left:400px;top:515px;width:220px;height:18px;background:#fff;border-color:#a9a9b1;"></div>
<div class="b" style="left:333px;top:545px;width:68px;height:20px;background:#e1e1e1;border-color:#adadad;"></div>
<div class="t tc" style="left:333px;width:70px;text-align:center;top:550px;"><u>O</u>ptions</div>
<div class="b" style="left:405px;top:545px;width:68px;height:20px;background:#e1e1e1;border-color:#adadad;"></div>
<div class="t tc" style="left:405px;width:70px;text-align:center;top:550px;">Ad<u>d</u>ress</div>
<div class="b" style="left:477px;top:545px;width:68px;height:20px;background:#e1e1e1;border-color:#adadad;"></div>
<div class="t tc" style="left:477px;width:70px;text-align:center;top:550px;"><u>A</u>ccounts</div>
<div class="b" style="left:549px;top:545px;width:66px;height:18px;background:#e1e1e1;border:2px solid #0078d7;"></div>
<div class="t tc" style="left:549px;width:70px;text-align:center;top:550px;">E-<u>m</u>ail</div>
<div class="ic" style="left:607px;top:510px;"><svg width="16" height="33" viewBox="0 0 16 33"><path d="M5 1 H12 V17 H15.5 L8.5 32 L1 17 H5 Z" fill="#e8141c"/></svg></div>
<div class="l" style="left:1px;top:574px;width:628px;height:1px;background:#a0a0a0"></div>
<div class="b" style="left:9px;top:579px;width:71px;height:20px;background:#f0f0f0;border-color:#a9a9b1;"></div>
<div class="ic" style="left:14px;top:585px;"><svg width="66" height="10" viewBox="0 0 66 10"><rect x="0.5" y="0" width="1.6" height="9.5" fill="#000"/><path d="M2.5 4.75 L9 0 V9.5 Z" fill="#000"/><path d="M19.5 4.75 L25 0 V9.5 Z" fill="#000"/><path d="M37.5 0 L43.5 4.75 L37.5 9.5Z" fill="#000"/><path d="M55 0 L61.5 4.75 L55 9.5Z" fill="#000"/><rect x="62" y="0" width="1.6" height="9.5" fill="#000"/></svg></div>
<div class="b" style="left:94px;top:579px;width:171px;height:18px;background:#fff;border-color:#7a7a7a;"></div>
<div class="t " style="left:97px;top:582px;">by Vendor ID</div>
<div class="ic" style="left:253px;top:586px;"><svg width="10" height="7" viewBox="0 0 10 7"><path d="M1 1.5 L5 5 L9 1.5" fill="none" stroke="#555" stroke-width="1.2"/></svg></div>
</body></html>
